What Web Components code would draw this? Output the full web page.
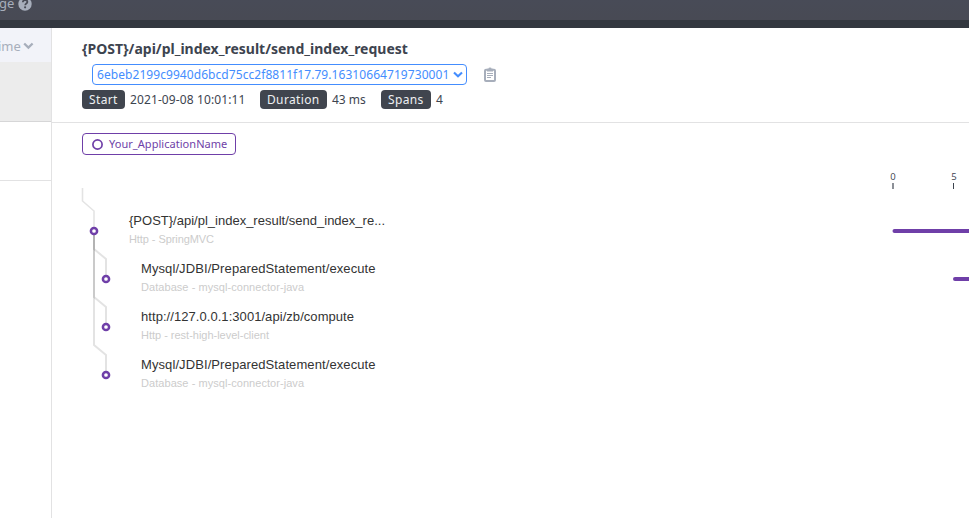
<!DOCTYPE html>
<html lang="en"><head><meta charset="utf-8"><title>Trace</title>
<style>html,body{margin:0;height:100%;overflow:hidden;background:#fff}body{font-family:"Noto Sans",sans-serif;color:#3d444f}</style></head>
<body><trace-page></trace-page>
<script>
const define = (name, html) => customElements.define(name, class extends HTMLElement {
  constructor() {
    super();
    this.attachShadow({ mode: 'open' }).innerHTML = html;
  }
});

define('top-bar', `<style>
:host{display:flex;height:20px;background:linear-gradient(#484b57,#484a54);border-bottom:8px solid #333840;overflow:hidden;color:#a7aebb;font-size:13px;line-height:18px;box-sizing:content-box}
span{margin:-6px 0 0 -1px;width:16px;height:18px;white-space:nowrap}
svg{margin:-3px 0 0 3px;flex:none}
</style><span><slot></slot></span>
<svg width="14" height="14" viewBox="0 0 14 14"><circle cx="7" cy="7" r="6.7" fill="#a7aebb"/><path d="M4.8 5.2C4.9 3.8 5.8 3.1 7.1 3.1c1.4 0 2.3.8 2.3 1.9 0 1.5-2.2 1.6-2.2 3.2" fill="none" stroke="#484b55" stroke-width="1.7"/><circle cx="7.1" cy="10.3" r="1.1" fill="#484b55"/></svg>`);

define('trace-list', `<style>
:host{display:flex;flex-direction:column;width:51px;flex:none;border-right:1px solid #e2e2e3}
.sort{display:flex;align-items:center;height:34px;background:#f2f3f9;color:#a7aebb;font-size:13px;overflow:hidden}
.sort span{margin:2px 0 0 -2px;width:22px;white-space:nowrap}
.sort svg{margin:2px 0 0 3px;flex:none}
.row{height:58px;border-bottom:1px solid #e2e2e3}
.row.on{height:59px;background:#ececec;border-color:#d6d6d7}
</style><div class="sort"><span>ime</span><svg width="11" height="8" viewBox="0 0 11 8"><path d="M1.2 1.5 5.4 5.6 9.6 1.5" fill="none" stroke="#a7aebb" stroke-width="2.3"/></svg></div>
<div class="row on"></div><div class="row"></div>`);

define('meta-item', `<style>
:host{display:flex;align-items:center;font-size:12px;line-height:19px;white-space:nowrap;letter-spacing:var(--value-spacing,0)}
.tag{box-sizing:border-box;width:var(--tag-width);background:#40454e;color:#eef0f2;border-radius:4px;padding-left:7px;margin-right:5px;height:19px;letter-spacing:.36px}
</style><div class="tag"><slot name="label"></slot></div><slot></slot>`);

define('trace-header', `<style>
:host{display:block;height:94px;border-bottom:1px solid #e2e2e3;box-sizing:content-box;padding-left:30px}
h5{margin:0;padding-top:11px;font-size:14px;line-height:20px;font-weight:700;color:#3d444f;white-space:nowrap}
.id{display:flex;align-items:center;margin:5px 0 0 10px;height:21px}
.select{display:flex;align-items:center;justify-content:space-between;box-sizing:border-box;width:375px;height:21px;border:1px solid #448dfe;border-radius:4px;color:#448dfe;font-size:12px;line-height:17px;padding:0 3px 0 4px;white-space:nowrap;letter-spacing:.063px}
.copy{margin-left:16px}
.meta{display:flex;margin-top:5px}
</style><h5>{POST}/api/pl_index_result/send_index_request</h5>
<div class="id"><div class="select"><span>6ebeb2199c9940d6bcd75cc2f8811f17.79.16310664719730001</span><svg width="10" height="8" viewBox="0 0 10 8"><path d="M1 1.5 5 5.3 9 1.5" fill="none" stroke="#448dfe" stroke-width="2.1"/></svg></div>
<svg class="copy" width="14" height="16" viewBox="0 0 14 16"><rect x="2" y="2.8" width="10" height="11.2" rx="1" fill="none" stroke="#a7aebb" stroke-width="2"/><path d="M4 1.8h1.4a1.6 1.3 0 0 1 3.2 0H10V4.6H4z" fill="#a7aebb"/><path d="M4 6.5h6M4 8.5h6M4 10.5h4" stroke="#a7aebb"/></svg></div>
<div class="meta"><meta-item style="width:178px;--tag-width:43px;--value-spacing:.11px"><span slot="label">Start</span>2021-09-08 10:01:11</meta-item><meta-item style="width:121px;--tag-width:67px"><span slot="label">Duration</span>43 ms</meta-item><meta-item style="--tag-width:50px"><span slot="label">Spans</span>4</meta-item></div>`);

define('service-tag', `<style>
:host{display:flex;align-items:center;align-self:flex-start;box-sizing:border-box;width:154px;height:22px;margin:10px 0 0 30px;padding-left:9px;border:1px solid #6f3fa8;border-radius:4px;color:#6f3fa8;font-size:11px;white-space:nowrap;letter-spacing:.04px}
svg{margin-right:6px}
span{margin-top:-2px}
</style><svg width="11" height="11"><circle cx="5.5" cy="5.5" r="4.6" fill="none" stroke="#6f3fa8" stroke-width="1.7"/></svg><span><slot></slot></span>`);

/* Span tree on the left, time axis with duration bars on the right. */
const spans = [
  [94, 231, '{POST}/api/pl_index_result/send_index_re...', 'Http - SpringMVC', 256, 85],
  [106, 279, 'Mysql/JDBI/PreparedStatement/execute', 'Database - mysql-connector-java', 234.5, 163],
  [106, 327, 'http://127.0.0.1:3001/api/zb/compute', 'Http - rest-high-level-client', 213, 128],
  [106, 375, 'Mysql/JDBI/PreparedStatement/execute', 'Database - mysql-connector-java', 234.5, 163]
];
define('span-tree', `<style>
:host{display:block;flex:1;min-height:0;overflow:hidden}
svg{display:block}
.name{font:13px "Liberation Sans",Arial,sans-serif;fill:#333}
.type{font:11px "Liberation Sans",Arial,sans-serif;fill:#ccc}
.tick{font:9.5px "Open Sans","Noto Sans",sans-serif;fill:#3d444f;text-anchor:middle}
</style><svg width="917" height="363" viewBox="52 155 917 363">
<g fill="none" stroke="#000" stroke-opacity=".11" stroke-width="2"><path d="M82.5 188V201L94 211V231" stroke-width="1.6"/><path d="M94 231V249L106 259V279"/><path d="M94 231V297L106 307V327"/><path d="M94 231V345L106 355V375"/></g>
${spans.map(([x, y, n, t, nw, tw]) => `<circle cx="${x}" cy="${y}" r="3.1" fill="#fff" stroke="#6f3fa8" stroke-width="2.5"/><text class="name" x="${x + 35}" y="${y - 6}" textLength="${nw}">${n}</text><text class="type" x="${x + 35}" y="${y + 12}" textLength="${tw}">${t}</text>`).join('')}
<text class="tick" x="893" y="180">0</text><text class="tick" x="954" y="180">5</text>
<path d="M893 183v6" stroke="#8c9097" stroke-width="2"/><path d="M953.5 183v6" stroke="#3d444f"/>
<rect x="892.5" y="229" width="90" height="4" rx="2" fill="#6f3fa8"/><rect x="953" y="277" width="40" height="4" rx="2" fill="#6f3fa8"/></svg>`);

define('trace-page', `<style>
:host{display:flex;flex-direction:column;height:518px}
.body{display:flex;flex:1;min-height:0}
main{display:flex;flex-direction:column;flex:1;min-width:0}
</style><top-bar>ge</top-bar><div class="body"><trace-list></trace-list><main><trace-header></trace-header><service-tag>Your_ApplicationName</service-tag><span-tree></span-tree></main></div>`);
</script></body></html>
